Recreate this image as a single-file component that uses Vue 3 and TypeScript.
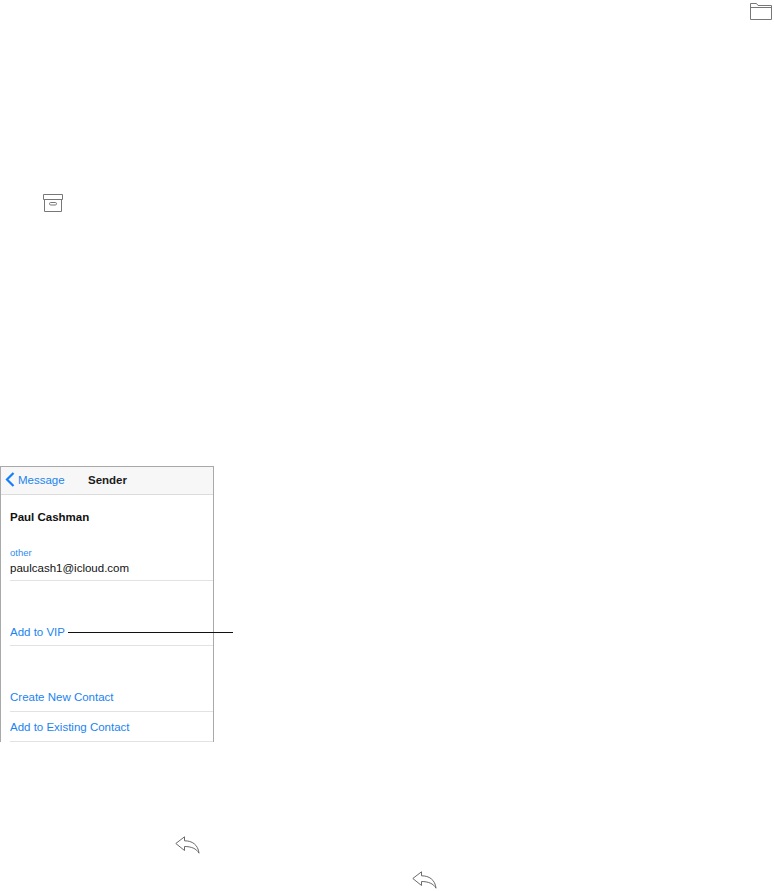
<script setup lang="ts">
const contactActions: string[] = ['Create New Contact', 'Add to Existing Contact']
</script>

<template>
  <main class="page">
    <div class="row folder-row">
      <svg class="icon" width="22" height="18" viewBox="0 0 22 18" fill="none" stroke="#777" stroke-width="1">
        <path d="M0.5 17.5V1.5H6.5L8 3.5H21.5V17.5Z" />
        <path d="M0.5 5.5H21.5" />
      </svg>
    </div>
    <div class="row archive-row">
      <svg class="icon" width="20" height="18" viewBox="0 0 20 18" fill="none" stroke="#777" stroke-width="1">
        <path d="M0.5 0.5H19.5V5.5H0.5Z" />
        <path d="M1.5 5.5V17.5H18.5V5.5" />
        <rect x="6.5" y="8.5" width="7" height="2.5" rx="1.2" />
      </svg>
    </div>

    <section class="phone">
      <header class="nav">
        <span class="back">
          <svg width="10" height="15" viewBox="0 0 10 15" fill="none" stroke="#147efb" stroke-width="2.2">
            <path d="M8.5 1L2 7.5L8.5 14" />
          </svg>
          Message
        </span>
        <span class="title">Sender</span>
      </header>
      <h1 class="name">Paul Cashman</h1>
      <div class="email">
        <div class="label">other</div>
        <div class="address">paulcash1@icloud.com</div>
      </div>
      <div class="vip action">
        Add to VIP
        <span class="leader"></span>
      </div>
      <div class="group">
        <div v-for="item in contactActions" :key="item" class="action">{{ item }}</div>
      </div>
    </section>

    <div class="row reply-one">
      <svg class="icon" width="25" height="18" viewBox="0 0 25 18" fill="none" stroke="#6a6a6a" stroke-width="1" stroke-linejoin="miter">
        <path d="M0.8 7.5L9.5 0.8V4.8C17 4.8 23 8.5 24 17.2C21.5 12.5 16 10.5 9.5 10.5V14.5Z" />
      </svg>
    </div>
    <div class="row reply-two">
      <svg class="icon" width="25" height="18" viewBox="0 0 25 18" fill="none" stroke="#6a6a6a" stroke-width="1" stroke-linejoin="miter">
        <path d="M0.8 7.5L9.5 0.8V4.8C17 4.8 23 8.5 24 17.2C21.5 12.5 16 10.5 9.5 10.5V14.5Z" />
      </svg>
    </div>
  </main>
</template>

<style scoped>
.page {
  width: 774px;
  height: 891px;
  overflow: hidden;
  background: #fff;
  font-family: "Liberation Sans", Arial, sans-serif;
  font-size: 11.5px;
  color: #111;
}
.row { display: flex; }
.icon { display: block; flex: none; }
.folder-row { justify-content: flex-end; padding: 2px 2px 0 0; }
.archive-row { padding: 174px 0 0 43px; }
.phone {
  box-sizing: border-box;
  width: 214px;
  height: 276px;
  margin-top: 254px;
  border: 1px solid #a9a9a9;
  border-bottom: 0;
}
.nav {
  box-sizing: border-box;
  height: 28px;
  background: #f7f7f7;
  border-bottom: 1px solid #dcdcdc;
  display: flex;
  align-items: center;
  padding: 0 0 2px 4px;
}
.back { display: flex; align-items: center; gap: 3px; color: #1a84f0; width: 83px; }
.title { font-weight: 700; color: #1c1c1c; }
.name { margin: 0; padding: 16px 0 0 9px; font-size: 11.5px; line-height: 13px; font-weight: 700; }
.email {
  margin: 23px 0 0 9px;
  padding-bottom: 5px;
  border-bottom: 1px solid #e2e2e2;
}
.label { color: #2f8cf0; font-size: 9.5px; line-height: 11px; }
.address { font-size: 11.5px; line-height: 14px; margin-top: 3px; }
.action {
  box-sizing: border-box;
  margin-left: 9px;
  height: 30px;
  line-height: 14px;
  padding-top: 8px;
  color: #1a84f0;
  border-bottom: 1px solid #e2e2e2;
}
.vip { position: relative; margin-top: 36px; height: 29px; }
.leader {
  position: absolute;
  left: 58px;
  top: 14.5px;
  width: 165px;
  height: 1px;
  background: #111;
}
.group { margin-top: 36px; }
.reply-one { margin-top: 94px; padding-left: 175px; }
.reply-two { margin-top: 17px; padding-left: 412px; }
</style>
